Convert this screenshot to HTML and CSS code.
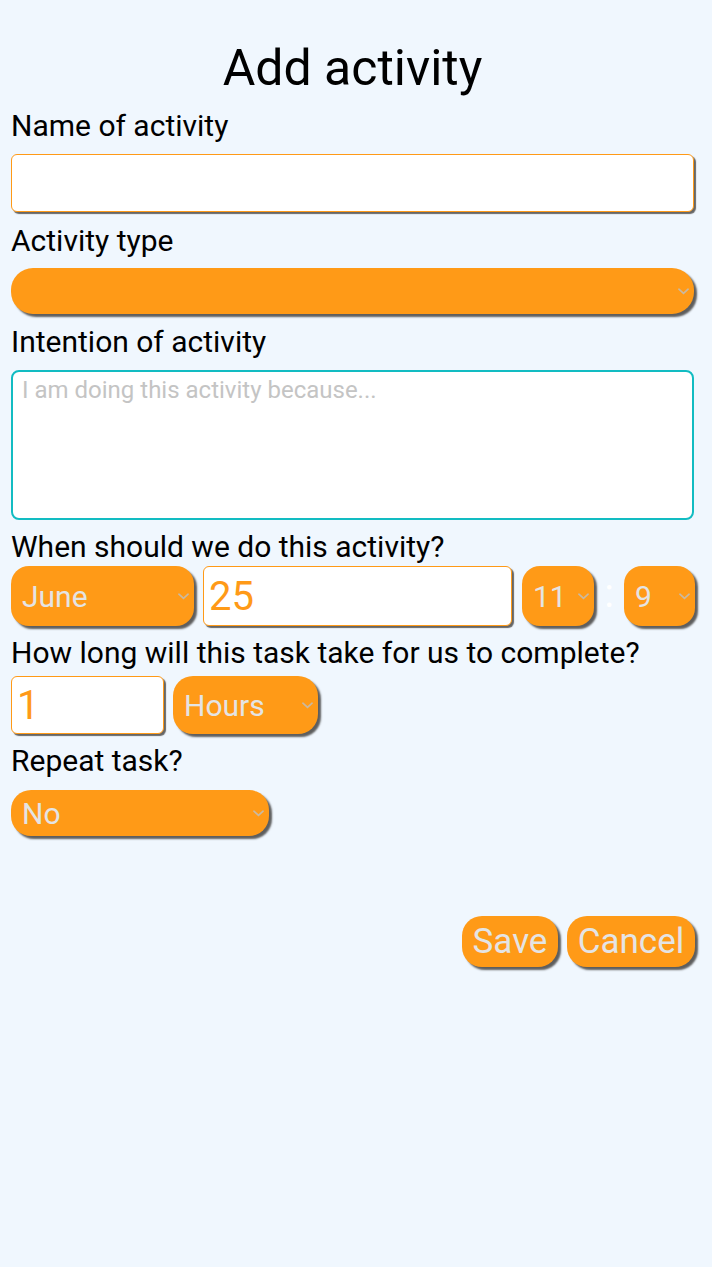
FILE: index.html
```html
<!DOCTYPE html>
<html lang="en">
<head>
<meta charset="utf-8">
<title>Add activity</title>
<link rel="stylesheet" href="styles.css">
</head>
<body>
<main class="page">
  <h1 class="title">Add activity</h1>

  <label class="label label-name">Name of activity</label>
  <input class="text-input name-input" type="text">

  <label class="label label-type">Activity type</label>
  <div class="sel sel-type">
    <select class="select"><option></option></select>
    <svg class="chev" viewBox="0 0 12 7" width="11" height="7"><path d="M1 1l5 4.5L11 1" fill="none" stroke="#c9b9a3" stroke-width="1.8" stroke-linecap="round"/></svg>
  </div>

  <label class="label label-intent">Intention of activity</label>
  <textarea class="intent" placeholder="I am doing this activity because..."></textarea>

  <label class="label label-when">When should we do this activity?</label>
  <div class="row row-when">
    <div class="sel sel-month">
      <select class="select"><option>June</option></select>
      <svg class="chev" viewBox="0 0 12 7" width="11" height="7"><path d="M1 1l5 4.5L11 1" fill="none" stroke="#c9b9a3" stroke-width="1.8" stroke-linecap="round"/></svg>
    </div>
    <input class="text-input big date-input" type="text" value="25">
    <div class="sel sel-hour">
      <select class="select"><option>11</option></select>
      <svg class="chev" viewBox="0 0 12 7" width="11" height="7"><path d="M1 1l5 4.5L11 1" fill="none" stroke="#c9b9a3" stroke-width="1.8" stroke-linecap="round"/></svg>
    </div>
    <span class="colon">:</span>
    <div class="sel sel-min">
      <select class="select"><option>9</option></select>
      <svg class="chev" viewBox="0 0 12 7" width="11" height="7"><path d="M1 1l5 4.5L11 1" fill="none" stroke="#c9b9a3" stroke-width="1.8" stroke-linecap="round"/></svg>
    </div>
  </div>

  <label class="label label-long">How long will this task take for us to complete?</label>
  <div class="row row-long">
    <input class="text-input big num-input" type="text" value="1">
    <div class="sel sel-unit">
      <select class="select"><option>Hours</option></select>
      <svg class="chev" viewBox="0 0 12 7" width="11" height="7"><path d="M1 1l5 4.5L11 1" fill="none" stroke="#c9b9a3" stroke-width="1.8" stroke-linecap="round"/></svg>
    </div>
  </div>

  <label class="label label-repeat">Repeat task?</label>
  <div class="sel sel-repeat">
    <select class="select"><option>No</option></select>
    <svg class="chev" viewBox="0 0 12 7" width="11" height="7"><path d="M1 1l5 4.5L11 1" fill="none" stroke="#c9b9a3" stroke-width="1.8" stroke-linecap="round"/></svg>
  </div>

  <div class="actions">
    <button class="btn btn-save" type="button">Save</button>
    <button class="btn btn-cancel" type="button">Cancel</button>
  </div>
</main>
</body>
</html>
```

FILE: styles.css
```css
* { box-sizing: border-box; }

html, body {
  margin: 0;
  background: #f0f7fe;
}

body {
  font-family: Roboto, "Liberation Sans", sans-serif;
  color: #000;
}

.page {
  display: flex;
  flex-direction: column;
  align-items: flex-start;
  padding: 39px 18px 40px 11px;
  width: 712px;
}

.title {
  align-self: stretch;
  margin: 0;
  font-size: 50px;
  font-weight: 400;
  line-height: 58px;
  text-align: center;
}

.label {
  display: block;
  font-size: 30px;
  line-height: 35px;
  margin: 0;
}

.label-name { margin-top: 11px; }
.label-type { margin-top: 11px; }
.label-intent { margin-top: 10px; }
.label-when { margin-top: 9px; }
.label-long { margin-top: 9px; }
.label-repeat { margin-top: 9px; }

.text-input {
  display: block;
  background: #fff;
  border: 1px solid #ff9a17;
  border-radius: 6px;
  box-shadow: 2px 2px 1px #666;
  outline: none;
  font-family: Roboto, "Liberation Sans", sans-serif;
  margin: 0;
}

.name-input {
  width: 683px;
  height: 58px;
  margin-top: 11px;
}

.big {
  font-size: 40px;
  color: #ff9a17;
  padding: 0 5px;
}

.sel {
  position: relative;
  flex: none;
}

.select {
  -webkit-appearance: none;
  appearance: none;
  display: block;
  width: 100%;
  height: 100%;
  margin: 0;
  border: none;
  outline: none;
  background: #ff9a17;
  color: #e4e4e4;
  font-family: Roboto, "Liberation Sans", sans-serif;
  font-size: 30px;
  padding: 0 20px 0 11px;
  box-shadow: 3px 3px 2px #5e5e5e;
}

.chev {
  position: absolute;
  right: 5px;
  top: 50%;
  margin-top: -3px;
}

.sel-type {
  width: 683px;
  height: 46px;
  margin-top: 10px;
}
.sel-type .select { border-radius: 22px; }

.intent {
  display: block;
  width: 683px;
  height: 150px;
  margin: 11px 0 0;
  border: 2px solid #12bcc2;
  border-radius: 8px;
  background: #fff;
  outline: none;
  resize: none;
  font-family: Roboto, "Liberation Sans", sans-serif;
  font-size: 24px;
  line-height: 28px;
  padding: 4px 9px;
}
.intent::placeholder { color: #c4c4c4; }

.row {
  display: flex;
  align-items: stretch;
}

.row-when {
  margin-top: 2px;
  height: 60px;
}

.sel-month { width: 183px; }
.sel-month .select { border-radius: 18px; }

.date-input {
  width: 309px;
  height: 60px;
  margin-left: 9px;
}

.sel-hour { width: 72px; margin-left: 10px; }
.sel-hour .select { border-radius: 18px; }

.colon {
  width: 30px;
  text-align: center;
  color: #ffffff;
  font-size: 40px;
  line-height: 56px;
}

.sel-min { width: 71px; }
.sel-min .select { border-radius: 18px; }

.row-long {
  margin-top: 6px;
  height: 58px;
}

.num-input {
  width: 153px;
  height: 58px;
}

.sel-unit { width: 145px; margin-left: 9px; }
.sel-unit .select { border-radius: 20px; }

.sel-repeat {
  width: 258px;
  height: 46px;
  margin-top: 12px;
}
.sel-repeat .select { border-radius: 20px; }

.actions {
  align-self: stretch;
  display: flex;
  justify-content: flex-end;
  gap: 9px;
  margin-top: 80px;
  margin-right: -1px;
}

.btn {
  height: 51px;
  border: none;
  border-radius: 20px;
  background: #ff9a17;
  color: #e4e4e4;
  font-family: Roboto, "Liberation Sans", sans-serif;
  font-size: 35px;
  padding: 0 8px;
  box-shadow: 3px 3px 2px #5e5e5e;
}
.btn-save { width: 96px; }
.btn-cancel { width: 128px; }
```
